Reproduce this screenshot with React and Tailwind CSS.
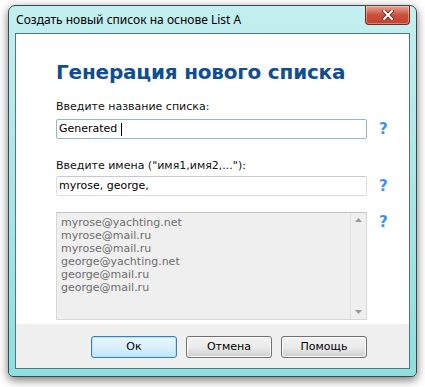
import { ChevronUp } from 'lucide-react';

const labelFont = { fontFamily: '"DejaVu Sans", Verdana, sans-serif' };

function Help() {
  return (
    <span className="ml-[12px] w-[10px] text-[15px] font-bold leading-[20px] text-[#3d93ec] font-['DejaVu_Sans',sans-serif]">
      ?
    </span>
  );
}

function Button({ children, primary }) {
  return (
    <button
      className={
        primary
          ? 'w-[86px] h-[22px] rounded-[3px] border border-[#3c7fb1] bg-gradient-to-b from-[#eaf6fd] via-[#d9f0fc] to-[#bee6fd] shadow-[inset_0_0_0_1px_#b6e3fb] text-[11px] text-black font-["DejaVu_Sans",sans-serif]'
          : 'w-[86px] h-[22px] rounded-[3px] border border-[#707070] bg-gradient-to-b from-[#f2f2f2] via-[#ebebeb] to-[#cfcfcf] shadow-[inset_0_0_0_1px_#fcfcfc] text-[11px] text-black font-["DejaVu_Sans",sans-serif]'
      }
    >
      {children}
    </button>
  );
}

export default function App() {
  const emails = [
    'myrose@yachting.net',
    'myrose@mail.ru',
    'myrose@mail.ru',
    'george@yachting.net',
    'george@mail.ru',
    'george@mail.ru',
  ];

  return (
    <div className="w-[425px] h-[387px] bg-white pt-[5px] pl-[8px] overflow-hidden">
      {/* Window */}
      <div className="w-[409px] h-[372px] flex flex-col rounded-t-[7px] rounded-b-[5px] border border-[#3a4a4c] bg-gradient-to-b from-[#c4eff0] via-[#a9e6e8] to-[#8fdfe0] shadow-[0_3px_10px_rgba(0,0,0,0.55)]">
        {/* Title bar */}
        <div className="h-[27px] flex items-start shrink-0">
          <div className="pl-[7px] pt-[6px] text-[12px] leading-[16px] text-black font-['Noto_Sans',sans-serif]">
            Создать новый список на основе List A
          </div>
          <div className="ml-auto mr-[6px] w-[45px] h-[19px] rounded-b-[4px] border border-t-0 border-[#6e2a22] bg-gradient-to-b from-[#e8a496] via-[#c9503a] to-[#c4422c] shadow-[inset_0_0_0_1px_rgba(255,255,255,0.35)] flex items-center justify-center">
            <svg width="12" height="10" viewBox="0 0 12 10">
              <path d="M2 1 L10 9 M10 1 L2 9" stroke="#4a2a26" strokeWidth="3.6" strokeLinecap="square" />
              <path d="M2 1 L10 9 M10 1 L2 9" stroke="#ffffff" strokeWidth="2" strokeLinecap="square" />
            </svg>
          </div>
        </div>

        {/* Client area */}
        <div className="mx-[6px] mb-[7px] flex-1 flex flex-col border border-[#52777b] bg-white">
          <div className="flex-1 pl-[40px] pt-[25px]" style={labelFont}>
            <div className="text-[20px] font-bold leading-[26px] text-[#104e8f] tracking-[-0.2px]">
              Генерация нового списка
            </div>

            <div className="mt-[15px] text-[11px] leading-[14px] text-[#111]">Введите название списка:</div>
            <div className="mt-[5px] flex items-center">
              <div className="w-[311px] h-[20px] border border-[#8fb5d9] rounded-[2px] flex items-center pl-[2px] text-[11px] text-black">
                Generated <span className="ml-[4px] inline-block w-px h-[13px] bg-black" />
              </div>
              <Help />
            </div>

            <div className="mt-[20px] text-[11px] leading-[14px] text-[#111]">Введите имена ("имя1,имя2,..."):</div>
            <div className="mt-[3px] flex items-center">
              <div className="w-[311px] h-[20px] border border-[#dadfe4] border-t-[#c6cbd0] rounded-[2px] flex items-center pl-[2px] text-[11px] text-black">
                myrose, george,
              </div>
              <Help />
            </div>

            <div className="mt-[16px] flex items-start">
              <div className="w-[311px] h-[108px] border border-[#d7d7d7] border-t-[#c4c4c4] bg-[#efefef] flex">
                <div className="flex-1 pl-[4px] pt-[3px] text-[11px] leading-[13px] text-[#6d6d6d]">
                  {emails.map((e, i) => (
                    <div key={i}>{e}</div>
                  ))}
                </div>
                <div className="w-[16px] border-l border-[#e2e2e2] flex flex-col items-center justify-between py-[5px]">
                  <svg width="7" height="4" viewBox="0 0 7 4"><path d="M3.5 0 L7 4 L0 4 Z" fill="#9a9a9a" /></svg>
                  <svg width="7" height="4" viewBox="0 0 7 4"><path d="M0 0 L7 0 L3.5 4 Z" fill="#9a9a9a" /></svg>
                </div>
              </div>
              <Help />
            </div>
          </div>

          {/* Footer */}
          <div className="h-[44px] shrink-0 bg-[#f0f0f0] flex justify-end gap-[9px] pr-[42px] pt-[12px]">
            <Button primary>Ок</Button>
            <Button>Отмена</Button>
            <Button>Помощь</Button>
          </div>
        </div>
      </div>
    </div>
  );
}
